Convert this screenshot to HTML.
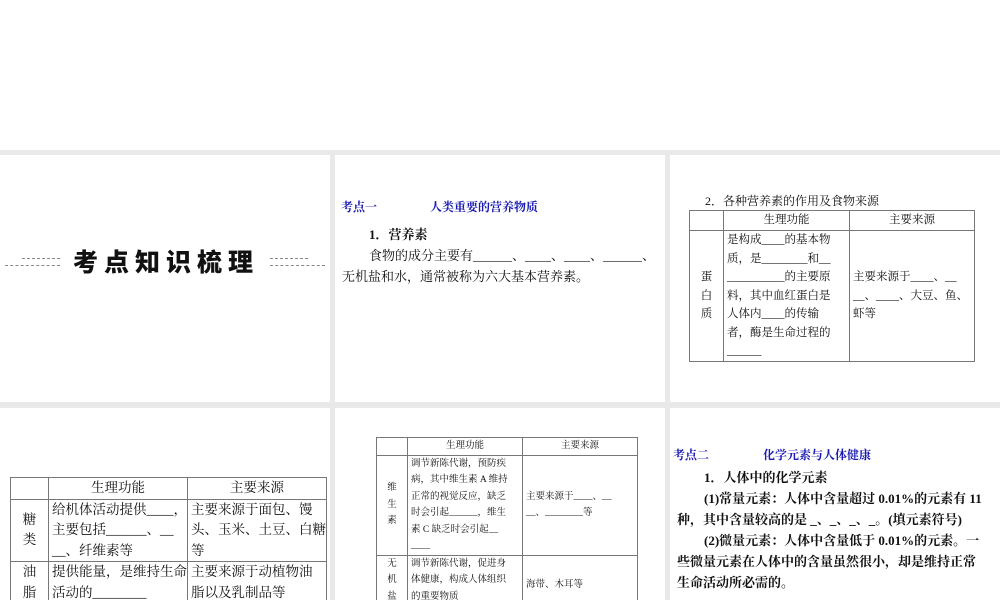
<!DOCTYPE html>
<html><head><meta charset="utf-8"><style>
*{margin:0;padding:0;box-sizing:border-box}
body{width:1000px;height:600px;overflow:hidden;background:#fff;position:relative;font-family:"Liberation Serif","Noto Serif CJK SC","Noto Sans CJK SC",serif;color:#111}
.bg{position:absolute;left:0;top:150px;width:1000px;height:450px;background:#e9e9e9}
.s{position:absolute;background:#fff;overflow:hidden}
.a{position:absolute;white-space:nowrap}
.blue{color:#1a1ab0;font-size:12px;font-weight:bold}
table{position:absolute;border-collapse:collapse;table-layout:fixed}
td{border:1px solid #777;vertical-align:middle;padding:0 3px;white-space:nowrap;overflow:hidden}
.dl{position:absolute;border-top:1px dashed #888;height:0}
</style></head><body>
<div class="bg"></div>
<div class="s" style="left:0;top:155px;width:330px;height:247px">
 <div class="dl" style="left:22px;top:103px;width:38px"></div>
 <div class="dl" style="left:5px;top:110px;width:55px"></div>
 <div class="dl" style="left:270px;top:103px;width:38px"></div>
 <div class="dl" style="left:270px;top:110px;width:55px"></div>
 <div class="a" style="left:73px;top:88px;font:900 25px 'Noto Sans CJK SC',sans-serif;letter-spacing:6px">考点知识梳理</div>
</div>
<div class="s" style="left:335px;top:155px;width:330px;height:247px;font-size:13px">
 <div class="a blue" style="left:6px;top:43px">考点一</div>
 <div class="a blue" style="left:95px;top:43px">人类重要的营养物质</div>
 <div class="a" style="left:34px;top:69px;font-weight:bold">1．营养素</div>
 <div class="a" style="left:34px;top:90px">食物的成分主要有______、____、____、______、</div>
 <div class="a" style="left:7px;top:111px">无机盐和水，通常被称为六大基本营养素。</div>
</div>
<div class="s" style="left:670px;top:155px;width:330px;height:247px;font-size:12px">
 <div class="a" style="left:35px;top:37px">2．各种营养素的作用及食物来源</div>
 <table style="left:19px;top:55px;width:286px;font-size:11.5px;line-height:18.5px">
  <col style="width:34px"><col style="width:126px"><col>
  <tr style="height:20px"><td></td><td style="text-align:center">生理功能</td><td style="text-align:center">主要来源</td></tr>
  <tr style="height:130px"><td style="text-align:center">蛋<br>白<br>质</td><td>是构成____的基本物<br>质，是________和__<br>__________的主要原<br>料，其中血红蛋白是<br>人体内____的传输<br>者，酶是生命过程的<br>______</td><td>主要来源于____、__<br>__、____、大豆、鱼、<br>虾等</td></tr>
 </table>
</div>
<div class="s" style="left:0;top:408px;width:330px;height:192px;font-size:13.5px">
 <table style="left:10px;top:69px;width:317px;line-height:20.5px">
  <col style="width:38px"><col style="width:139px"><col>
  <tr style="height:21px"><td></td><td style="text-align:center">生理功能</td><td style="text-align:center">主要来源</td></tr>
  <tr><td style="text-align:center">糖<br>类</td><td>给机体活动提供____，<br>主要包括______、__<br>__、纤维素等</td><td>主要来源于面包、馒<br>头、玉米、土豆、白糖<br>等</td></tr>
  <tr><td style="text-align:center">油<br>脂</td><td>提供能量，是维持生命<br>活动的________</td><td>主要来源于动植物油<br>脂以及乳制品等</td></tr>
 </table>
</div>
<div class="s" style="left:335px;top:408px;width:330px;height:192px;font-size:9.5px">
 <table style="left:41px;top:29px;width:262px;line-height:16.5px">
  <col style="width:31px"><col style="width:115px"><col>
  <tr style="height:17px"><td></td><td style="text-align:center">生理功能</td><td style="text-align:center">主要来源</td></tr>
  <tr style="height:99px"><td style="text-align:center">维<br>生<br>素</td><td>调节新陈代谢，预防疾<br>病，其中维生素 A 维持<br>正常的视觉反应，缺乏<br>时会引起______，维生<br>素 C 缺乏时会引起__<br>____</td><td>主要来源于____、__<br>__、________等</td></tr>
  <tr style="height:60px"><td style="text-align:center;vertical-align:top">无<br>机<br>盐</td><td style="vertical-align:top">调节新陈代谢，促进身<br>体健康，构成人体组织<br>的重要物质</td><td>海带、木耳等</td></tr>
 </table>
</div>
<div class="s" style="left:670px;top:408px;width:330px;height:192px;font-size:13px">
 <div class="a blue" style="left:3px;top:38px">考点二</div>
 <div class="a blue" style="left:93px;top:38px">化学元素与人体健康</div>
 <div style="position:absolute;left:7px;top:59px;width:315px;line-height:21px;font-weight:bold;white-space:nowrap">
  <div style="padding-left:27px">1．人体中的化学元素</div>
  <div style="padding-left:27px">(1)常量元素：人体中含量超过 0.01%的元素有 11</div>
  <div>种，其中含量较高的是 _、_、_、_。(填元素符号)</div>
  <div style="padding-left:27px">(2)微量元素：人体中含量低于 0.01%的元素。一</div>
  <div>些微量元素在人体中的含量虽然很小，却是维持正常</div>
  <div>生命活动所必需的。</div>
 </div>
</div>
</body></html>
